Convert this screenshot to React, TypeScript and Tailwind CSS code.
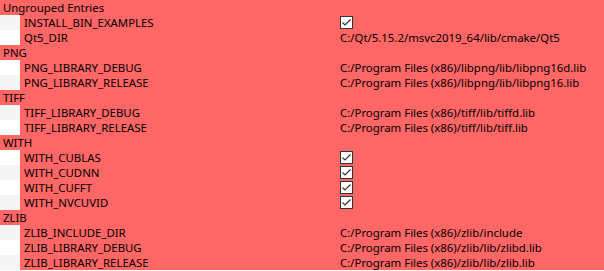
import React from "react";

type Row = { kind: "group"; name: string } | { kind: "item"; name: string; value?: string; check?: boolean };

const rows: Row[] = [
  { kind: "group", name: "Ungrouped Entries" },
  { kind: "item", name: "INSTALL_BIN_EXAMPLES", check: true },
  { kind: "item", name: "Qt5_DIR", value: "C:/Qt/5.15.2/msvc2019_64/lib/cmake/Qt5" },
  { kind: "group", name: "PNG" },
  { kind: "item", name: "PNG_LIBRARY_DEBUG", value: "C:/Program Files (x86)/libpng/lib/libpng16d.lib" },
  { kind: "item", name: "PNG_LIBRARY_RELEASE", value: "C:/Program Files (x86)/libpng/lib/libpng16.lib" },
  { kind: "group", name: "TIFF" },
  { kind: "item", name: "TIFF_LIBRARY_DEBUG", value: "C:/Program Files (x86)/tiff/lib/tiffd.lib" },
  { kind: "item", name: "TIFF_LIBRARY_RELEASE", value: "C:/Program Files (x86)/tiff/lib/tiff.lib" },
  { kind: "group", name: "WITH" },
  { kind: "item", name: "WITH_CUBLAS", check: true },
  { kind: "item", name: "WITH_CUDNN", check: true },
  { kind: "item", name: "WITH_CUFFT", check: true },
  { kind: "item", name: "WITH_NVCUVID", check: true },
  { kind: "group", name: "ZLIB" },
  { kind: "item", name: "ZLIB_INCLUDE_DIR", value: "C:/Program Files (x86)/zlib/include" },
  { kind: "item", name: "ZLIB_LIBRARY_DEBUG", value: "C:/Program Files (x86)/zlib/lib/zlibd.lib" },
  { kind: "item", name: "ZLIB_LIBRARY_RELEASE", value: "C:/Program Files (x86)/zlib/lib/zlib.lib" },
];

function Check() {
  return (
    <div className="w-[13px] h-[13px] border border-[#333333] bg-white flex items-center justify-center">
      <svg width="11" height="11" viewBox="0 0 11 11">
        <path d="M1.5 5.5 L4 8 L9.5 2.5" fill="none" stroke="#333" strokeWidth="1.2" />
      </svg>
    </div>
  );
}

export default function App() {
  return (
    <div
      className="w-[604px] h-[271px] bg-white overflow-hidden text-[11.4px] text-black leading-[15px]"
      style={{ fontFamily: '"Segoe UI", "Noto Sans", "Open Sans", sans-serif' }}
    >
      {rows.map((r, i) =>
        r.kind === "group" ? (
          <div key={i} className="h-[15px] bg-[#ff6666] pl-[3px] flex items-center overflow-hidden">
            {r.name}
          </div>
        ) : (
          <div key={i} className="h-[15px] flex overflow-hidden">
            <div className={i % 2 === 1 ? "w-[20px] bg-[#f5f5f5]" : "w-[20px] bg-white"} />
            <div className="flex-1 bg-[#ff6666] flex items-center">
              <div className="w-[320px] pl-[4px]">{r.name}</div>
              <div className="flex-1 flex items-center">
                {r.check ? <Check /> : r.value}
              </div>
            </div>
          </div>
        )
      )}
    </div>
  );
}
